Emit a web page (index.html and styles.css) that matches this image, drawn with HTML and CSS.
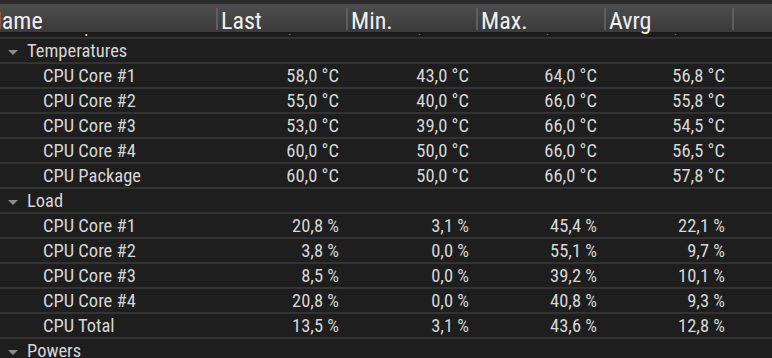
FILE: index.html
```html
<!DOCTYPE html>
<html>
<head>
<meta charset="utf-8">
<link rel="stylesheet" href="styles.css">
</head>
<body>
<div class="view">
  <div class="header">
    <div class="hc hname"><span class="htxt">Name</span></div>
    <div class="hc"><span class="htxt">Last</span></div>
    <div class="hc"><span class="htxt">Min.</span></div>
    <div class="hc"><span class="htxt">Max.</span></div>
    <div class="hc"><span class="htxt">Avrg</span></div>
    <div class="hc hrest"></div>
  </div>
  <div class="body">
    <div class="list">
      <div class="row"><div class="n child">Bus Speed</div><div class="v">99,8 MHz</div><div class="v">99,8 MHz</div><div class="v">99,8 MHz</div><div class="v">99,8 MHz</div></div>

      <div class="row"><div class="n group"><span class="tri"></span>Temperatures</div><div class="v"></div><div class="v"></div><div class="v"></div><div class="v"></div></div>
      <div class="row"><div class="n child">CPU Core #1</div><div class="v">58,0 °C</div><div class="v">43,0 °C</div><div class="v">64,0 °C</div><div class="v">56,8 °C</div></div>
      <div class="row"><div class="n child">CPU Core #2</div><div class="v">55,0 °C</div><div class="v">40,0 °C</div><div class="v">66,0 °C</div><div class="v">55,8 °C</div></div>
      <div class="row"><div class="n child">CPU Core #3</div><div class="v">53,0 °C</div><div class="v">39,0 °C</div><div class="v">66,0 °C</div><div class="v">54,5 °C</div></div>
      <div class="row"><div class="n child">CPU Core #4</div><div class="v">60,0 °C</div><div class="v">50,0 °C</div><div class="v">66,0 °C</div><div class="v">56,5 °C</div></div>
      <div class="row"><div class="n child">CPU Package</div><div class="v">60,0 °C</div><div class="v">50,0 °C</div><div class="v">66,0 °C</div><div class="v">57,8 °C</div></div>

      <div class="row"><div class="n group"><span class="tri"></span>Load</div><div class="v"></div><div class="v"></div><div class="v"></div><div class="v"></div></div>
      <div class="row"><div class="n child">CPU Core #1</div><div class="v">20,8 %</div><div class="v">3,1 %</div><div class="v">45,4 %</div><div class="v">22,1 %</div></div>
      <div class="row"><div class="n child">CPU Core #2</div><div class="v">3,8 %</div><div class="v">0,0 %</div><div class="v">55,1 %</div><div class="v">9,7 %</div></div>
      <div class="row"><div class="n child">CPU Core #3</div><div class="v">8,5 %</div><div class="v">0,0 %</div><div class="v">39,2 %</div><div class="v">10,1 %</div></div>
      <div class="row"><div class="n child">CPU Core #4</div><div class="v">20,8 %</div><div class="v">0,0 %</div><div class="v">40,8 %</div><div class="v">9,3 %</div></div>
      <div class="row"><div class="n child">CPU Total</div><div class="v">13,5 %</div><div class="v">3,1 %</div><div class="v">43,6 %</div><div class="v">12,8 %</div></div>

      <div class="row"><div class="n group"><span class="tri"></span>Powers</div><div class="v"></div><div class="v"></div><div class="v"></div><div class="v"></div></div>
    </div>
  </div>
</div>
</body>
</html>
```
FILE: styles.css
```css
html, body {
  margin: 0;
  padding: 0;
  background: #1e1e1e;
}
.view {
  width: 772px;
  height: 358px;
  overflow: hidden;
  background: #1e1e1e;
  font-family: "Roboto Condensed", "Roboto", sans-serif;
  color: #d6d6d6;
}
.header {
  display: grid;
  grid-template-columns: 218px 130px 130px 128px 128px 1fr;
  height: 34px;
  box-sizing: border-box;
  border-top: 4px solid #2b2b2b;
  border-bottom: 2px solid #1a1a1a;
  background: linear-gradient(#4d4d4d, #3b3b3b);
}
.hc {
  margin-top: 4px;
  height: 22px;
  border-right: 2px solid #5e5e5e;
  padding-left: 3px;
  overflow: visible;
  white-space: nowrap;
}
.hrest {
  border-right: none;
}
.htxt {
  display: block;
  font-size: 24px;
  line-height: 22px;
  padding-top: 2px;
  color: #f0f0f0;
}
.hname {
  padding-left: 0;
}
.hname .htxt {
  margin-left: -13px;
}
.body {
  height: 324px;
  overflow: hidden;
}
.list {
  margin-top: -20px;
}
.row {
  display: grid;
  grid-template-columns: 218px 130px 130px 128px 128px 1fr;
  height: 25px;
  box-sizing: border-box;
  border-bottom: 2px solid #333333;
  font-size: 18.5px;
  line-height: 21px;
  padding-top: 2px;
  white-space: nowrap;
}
.n {
  display: flex;
  align-items: center;
  height: 21px;
}
.child {
  padding-left: 43px;
}
.group {
  padding-left: 8px;
}
.tri {
  width: 0;
  height: 0;
  border-left: 5px solid transparent;
  border-right: 5px solid transparent;
  border-top: 5px solid #8c8c8c;
  margin-right: 9px;
  margin-top: 1px;
}
.v {
  text-align: right;
  padding-right: 9px;
}
```
